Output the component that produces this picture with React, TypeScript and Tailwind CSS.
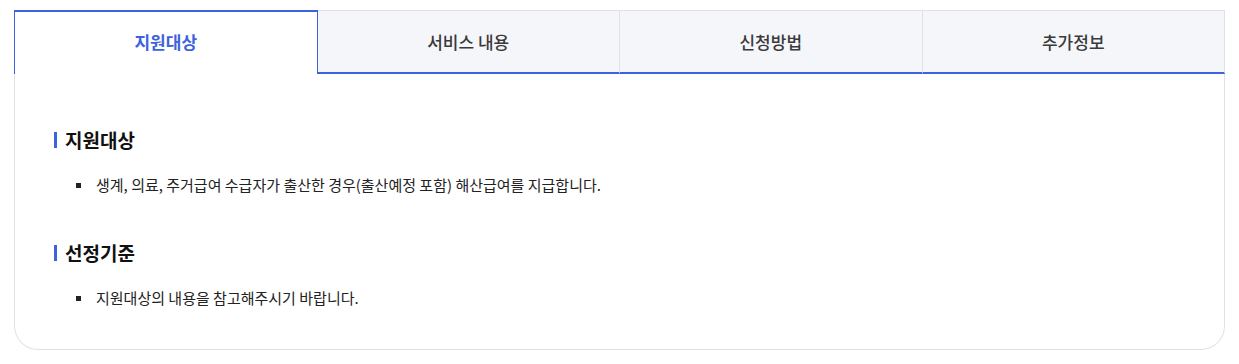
import { FC } from "react";

const tabs = ["지원대상", "서비스 내용", "신청방법", "추가정보"];

const sections = [
  {
    title: "지원대상",
    items: [
      "생계, 의료, 주거급여 수급자가 출산한 경우(출산예정 포함) 해산급여를 지급합니다.",
    ],
  },
  {
    title: "선정기준",
    items: ["지원대상의 내용을 참고해주시기 바랍니다."],
  },
];

const App: FC = () => {
  const active = 0;

  return (
    <div
      className="bg-white px-[14px] pt-[10px] text-[#222]"
      style={{ fontFamily: '"Noto Sans CJK KR", "Noto Sans", sans-serif' }}
    >
      {/* tabs */}
      <div className="flex h-[64px]">
        {tabs.map((tab, index) => {
          if (index === active) {
            return (
              <div
                key={index}
                className="flex flex-1 items-center justify-center border-x border-t-2 border-[#3d62dc] bg-white pb-[2px] text-[17px] font-bold text-[#3d62dc]"
              >
                {tab}
              </div>
            );
          }
          return (
            <div
              key={index}
              className={
                "flex flex-1 items-center justify-center border-t border-b-2 border-t-[#dfe1e6] border-b-[#3d62dc] bg-[#f5f6fa] text-[17px] font-medium text-[#3a3a3a] " +
                (index === tabs.length - 1 ? "border-r border-r-[#dfe1e6] " : "") +
                (index > active + 1 ? "border-l border-l-[#dfe1e6]" : "")
              }
            >
              {tab}
            </div>
          );
        })}
      </div>

      {/* content */}
      <div className="rounded-b-[24px] border-x border-b border-[#e2e2e2] px-[39px] pt-[53px] pb-[39px]">
        {sections.map((section, index) => (
          <div key={index} className={index > 0 ? "mt-[43px]" : ""}>
            <div className="flex items-center gap-[8px]">
              <span className="h-[16px] w-[3px] bg-[#3d62dc]"></span>
              <h3 className="text-[19px] leading-[26px] font-bold text-[#111]">
                {section.title}
              </h3>
            </div>
            <ul className="mt-[20px]">
              {section.items.map((item, i) => (
                <li
                  key={i}
                  className="flex items-center pl-[22px] text-[15px] leading-[24px] text-[#222]"
                >
                  <span className="mr-[15px] h-[5px] w-[5px] bg-[#222]"></span>
                  {item}
                </li>
              ))}
            </ul>
          </div>
        ))}
      </div>
    </div>
  );
};

export default App;
